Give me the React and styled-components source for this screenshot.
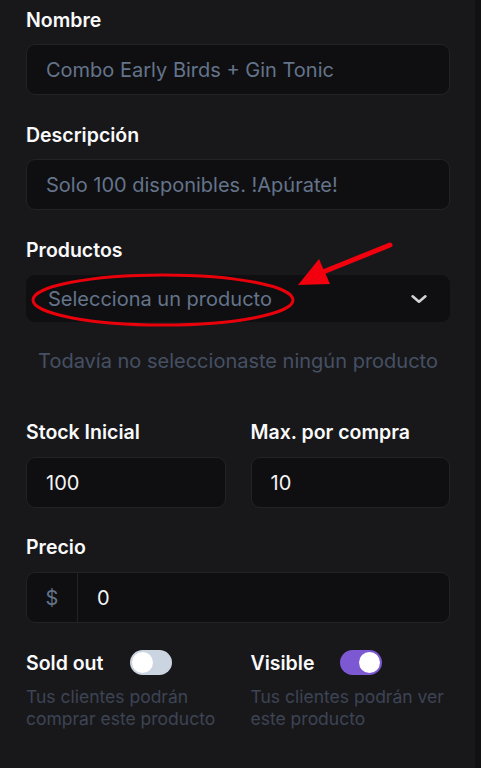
import React, { useState } from "react";
import styled, { createGlobalStyle } from "styled-components";

const GlobalStyle = createGlobalStyle`
  html, body {
    margin: 0;
    padding: 0;
    background: #111113;
  }
  body {
    font-family: Inter, "Noto Sans", "Liberation Sans", sans-serif;
  }
`;

const Page = styled.div`
  display: flex;
  width: 481px;
  height: 768px;
  overflow: hidden;
`;

const Panel = styled.div`
  position: relative;
  flex: 1;
  background: #18181b;
  padding: 8px 25px 0 26px;
  display: flex;
  flex-direction: column;
`;

const Strip = styled.div`
  width: 6px;
  background: #111113;
`;

const Field = styled.div`
  display: flex;
  flex-direction: column;
  margin-bottom: ${(p) => p.$mb ?? 28}px;
  min-width: 0;
`;

const Label = styled.div`
  color: #fafafa;
  font-size: 19.5px;
  font-weight: 600;
  line-height: 24px;
  margin-bottom: ${(p) => p.$mb ?? 12}px;
  white-space: nowrap;
`;

const Input = styled.div`
  height: 51px;
  box-sizing: border-box;
  background: #0f0f11;
  border: 1px solid #232326;
  border-radius: 9px;
  display: flex;
  align-items: center;
  padding-left: 19px;
  font-size: 20px;
  color: ${(p) => (p.$value ? "#f4f4f5" : "#64748b")};
  white-space: nowrap;
`;

const Select = styled.div`
  height: 47px;
  box-sizing: border-box;
  background: #0f0f11;
  border-radius: 9px;
  display: flex;
  align-items: center;
  justify-content: space-between;
  padding: 0 20px 0 22px;
  font-size: 20px;
  color: #64748b;
`;

const Empty = styled.div`
  text-align: center;
  color: #465063;
  font-size: 20px;
  line-height: 24px;
  margin: 27px 0 47px;
  white-space: nowrap;
`;

const Row = styled.div`
  display: grid;
  grid-template-columns: 1fr 1fr;
  column-gap: 25px;
`;

const Group = styled.div`
  height: 51px;
  box-sizing: border-box;
  background: #0f0f11;
  border: 1px solid #232326;
  border-radius: 9px;
  display: flex;
  align-items: stretch;
  font-size: 20px;
`;

const Addon = styled.div`
  width: 50px;
  border-right: 1px solid #232326;
  display: flex;
  align-items: center;
  justify-content: center;
  color: #64748b;
`;

const GroupValue = styled.div`
  display: flex;
  align-items: center;
  padding-left: 19px;
  color: #f4f4f5;
`;

const ToggleRow = styled.div`
  display: flex;
  align-items: center;
  height: 25px;
  margin-bottom: 11px;
`;

const ToggleLabel = styled.span`
  color: #fafafa;
  font-size: 19.5px;
  font-weight: 600;
  width: ${(p) => p.$w}px;
`;

const Switch = styled.button`
  width: 42px;
  height: 25px;
  border: none;
  border-radius: 13px;
  padding: 2px;
  background: ${(p) => (p.$on ? "#7c58d3" : "#cbd5e1")};
  display: flex;
  justify-content: ${(p) => (p.$on ? "flex-end" : "flex-start")};
  align-items: center;
  cursor: pointer;
  &::after {
    content: "";
    width: 21px;
    height: 21px;
    border-radius: 50%;
    background: #ffffff;
  }
`;

const Help = styled.div`
  color: #3d4454;
  font-size: 17.5px;
  line-height: 21.5px;
`;

const Annotation = styled.svg`
  position: absolute;
  left: 0;
  top: 0;
  pointer-events: none;
`;

const Chevron = () => (
  <svg width="22" height="22" viewBox="0 0 24 24" fill="none" stroke="#d4d4d8" strokeWidth="2.8" strokeLinecap="round" strokeLinejoin="round">
    <path d="M5 9l7 6 7-6" />
  </svg>
);

export default function App() {
  const [soldOut, setSoldOut] = useState(false);
  const [visible, setVisible] = useState(true);

  return (
    <Page>
      <GlobalStyle />
      <Panel>
        <Field>
          <Label>Nombre</Label>
          <Input>Combo Early Birds + Gin Tonic</Input>
        </Field>
        <Field>
          <Label>Descripción</Label>
          <Input>Solo 100 disponibles. !Apúrate!</Input>
        </Field>
        <Field $mb={0}>
          <Label $mb={13}>Productos</Label>
          <Select>
            <span>Selecciona un producto</span>
            <Chevron />
          </Select>
        </Field>
        <Empty>Todavía no seleccionaste ningún producto</Empty>
        <Row>
          <Field $mb={27}>
            <Label $mb={13}>Stock Inicial</Label>
            <Input $value>100</Input>
          </Field>
          <Field $mb={27}>
            <Label $mb={13}>Max. por compra</Label>
            <Input $value>10</Input>
          </Field>
        </Row>
        <Field $mb={27}>
          <Label $mb={13}>Precio</Label>
          <Group>
            <Addon>$</Addon>
            <GroupValue>0</GroupValue>
          </Group>
        </Field>
        <Row>
          <div>
            <ToggleRow>
              <ToggleLabel $w={104}>Sold out</ToggleLabel>
              <Switch $on={soldOut} onClick={() => setSoldOut(!soldOut)} />
            </ToggleRow>
            <Help>Tus clientes podrán comprar este producto</Help>
          </div>
          <div>
            <ToggleRow>
              <ToggleLabel $w={89}>Visible</ToggleLabel>
              <Switch $on={visible} onClick={() => setVisible(!visible)} />
            </ToggleRow>
            <Help>Tus clientes podrán ver este producto</Help>
          </div>
        </Row>

        <Annotation width="475" height="768">
          <ellipse cx="163" cy="300" rx="130" ry="25" fill="none" stroke="#e8000b" strokeWidth="3" />
          <line x1="390" y1="245" x2="318" y2="274" stroke="#f2000d" strokeWidth="5" strokeLinecap="round" />
          <polygon points="298,285 319,259 330,284" fill="#f2000d" />
        </Annotation>
      </Panel>
      <Strip />
    </Page>
  );
}
